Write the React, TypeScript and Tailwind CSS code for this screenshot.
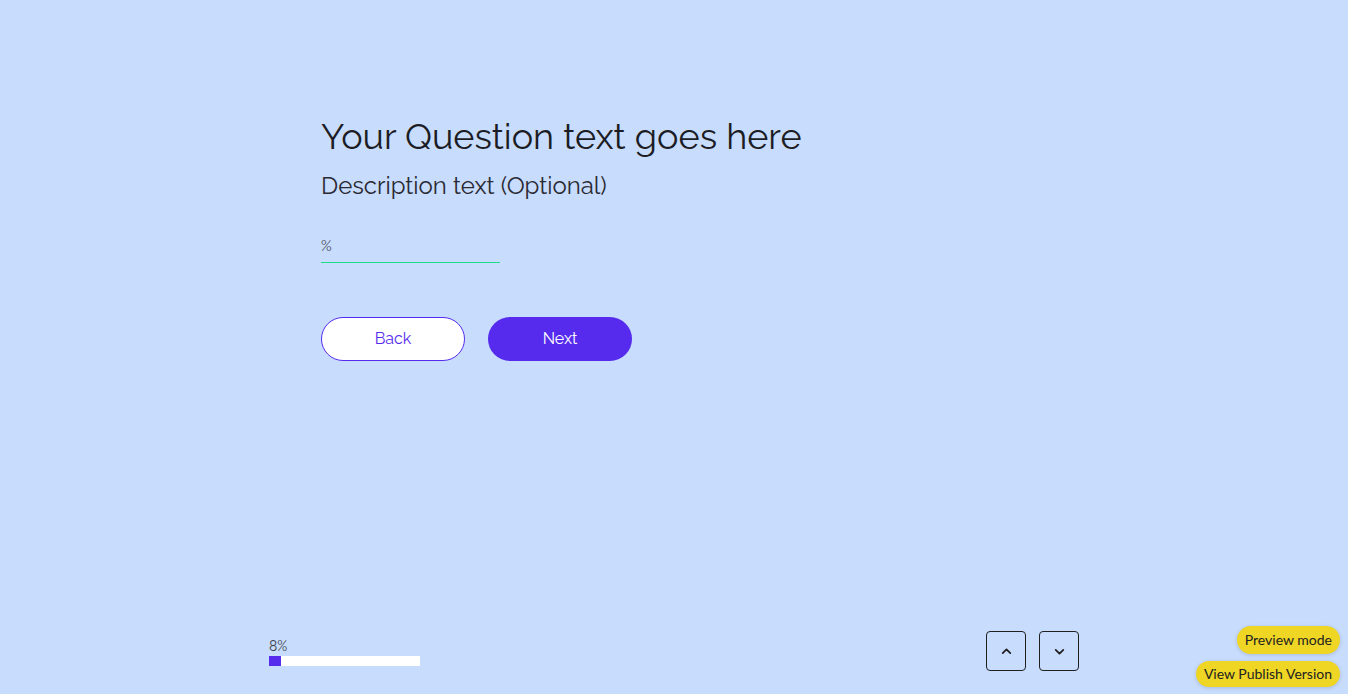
import React from "react";

const font = { fontFamily: "Raleway, 'Open Sans', 'Noto Sans', sans-serif" };

const Chevron = ({ up }: { up?: boolean }) => (
  <svg width="13" height="13" viewBox="0 0 24 24" fill="none" stroke="#1f1f1f" strokeWidth={3.2} strokeLinecap="round" strokeLinejoin="round">
    <path d={up ? "M5 15l7-7 7 7" : "M5 9l7 7 7-7"} />
  </svg>
);

export default function App() {
  return (
    <div className="relative flex h-[694px] w-full flex-col overflow-hidden bg-[#c8dcfd]" style={font}>
      {/* Question */}
      <div className="flex-1 pl-[321px] pt-[114px]">
        <h1 className="text-[36px] leading-[44px] font-normal text-[#1c1c24]">
          Your Question text goes here
        </h1>
        <p className="mt-[12px] text-[24px] leading-[32px] text-[#2a2a33]">Description text (Optional)</p>

        <div className="mt-[32px] w-[179px] border-b border-[#1ddc8a] pb-[4px]">
          <span className="text-[15px] leading-[18px] text-[#4a4f5a]">%</span>
        </div>

        <div className="mt-[54px] flex gap-[23px]">
          <button className="h-[44px] w-[144px] rounded-full border border-[#562bee] bg-white text-[16px] text-[#562bee]">
            Back
          </button>
          <button className="h-[44px] w-[144px] rounded-full bg-[#562bee] text-[16px] text-white">
            Next
          </button>
        </div>
      </div>

      {/* Footer */}
      <div className="flex items-end pb-[23px] pl-[269px]">
        <div className="flex w-[151px] flex-col pb-[5px]">
          <span className="text-[14px] leading-[16px] text-[#3a3f4a]">8%</span>
          <div className="mt-[2px] h-[10px] w-[151px] bg-white">
            <div className="h-full w-[12px] bg-[#562bee]" />
          </div>
        </div>
        <div className="ml-[566px] flex gap-[13px]">
          <button className="flex h-[40px] w-[40px] items-center justify-center rounded-[4px] border border-[#1f1f1f]">
            <Chevron up />
          </button>
          <button className="flex h-[40px] w-[40px] items-center justify-center rounded-[4px] border border-[#1f1f1f]">
            <Chevron />
          </button>
        </div>
      </div>

      {/* Badges */}
      <div className="absolute right-[8px] bottom-[7px] flex flex-col items-end gap-[7px]" style={{ fontFamily: "Lato, 'Open Sans', sans-serif" }}>
        <span className="rounded-full bg-[#efd524] px-[8px] py-[5px] text-[14px] leading-[18px] text-[#222] shadow-[0_1px_4px_rgba(0,0,0,0.15)]">
          Preview mode
        </span>
        <span className="rounded-full bg-[#efd524] px-[8px] py-[4px] text-[14px] leading-[18px] text-[#222] shadow-[0_1px_4px_rgba(0,0,0,0.15)]">
          View Publish Version
        </span>
      </div>
    </div>
  );
}
